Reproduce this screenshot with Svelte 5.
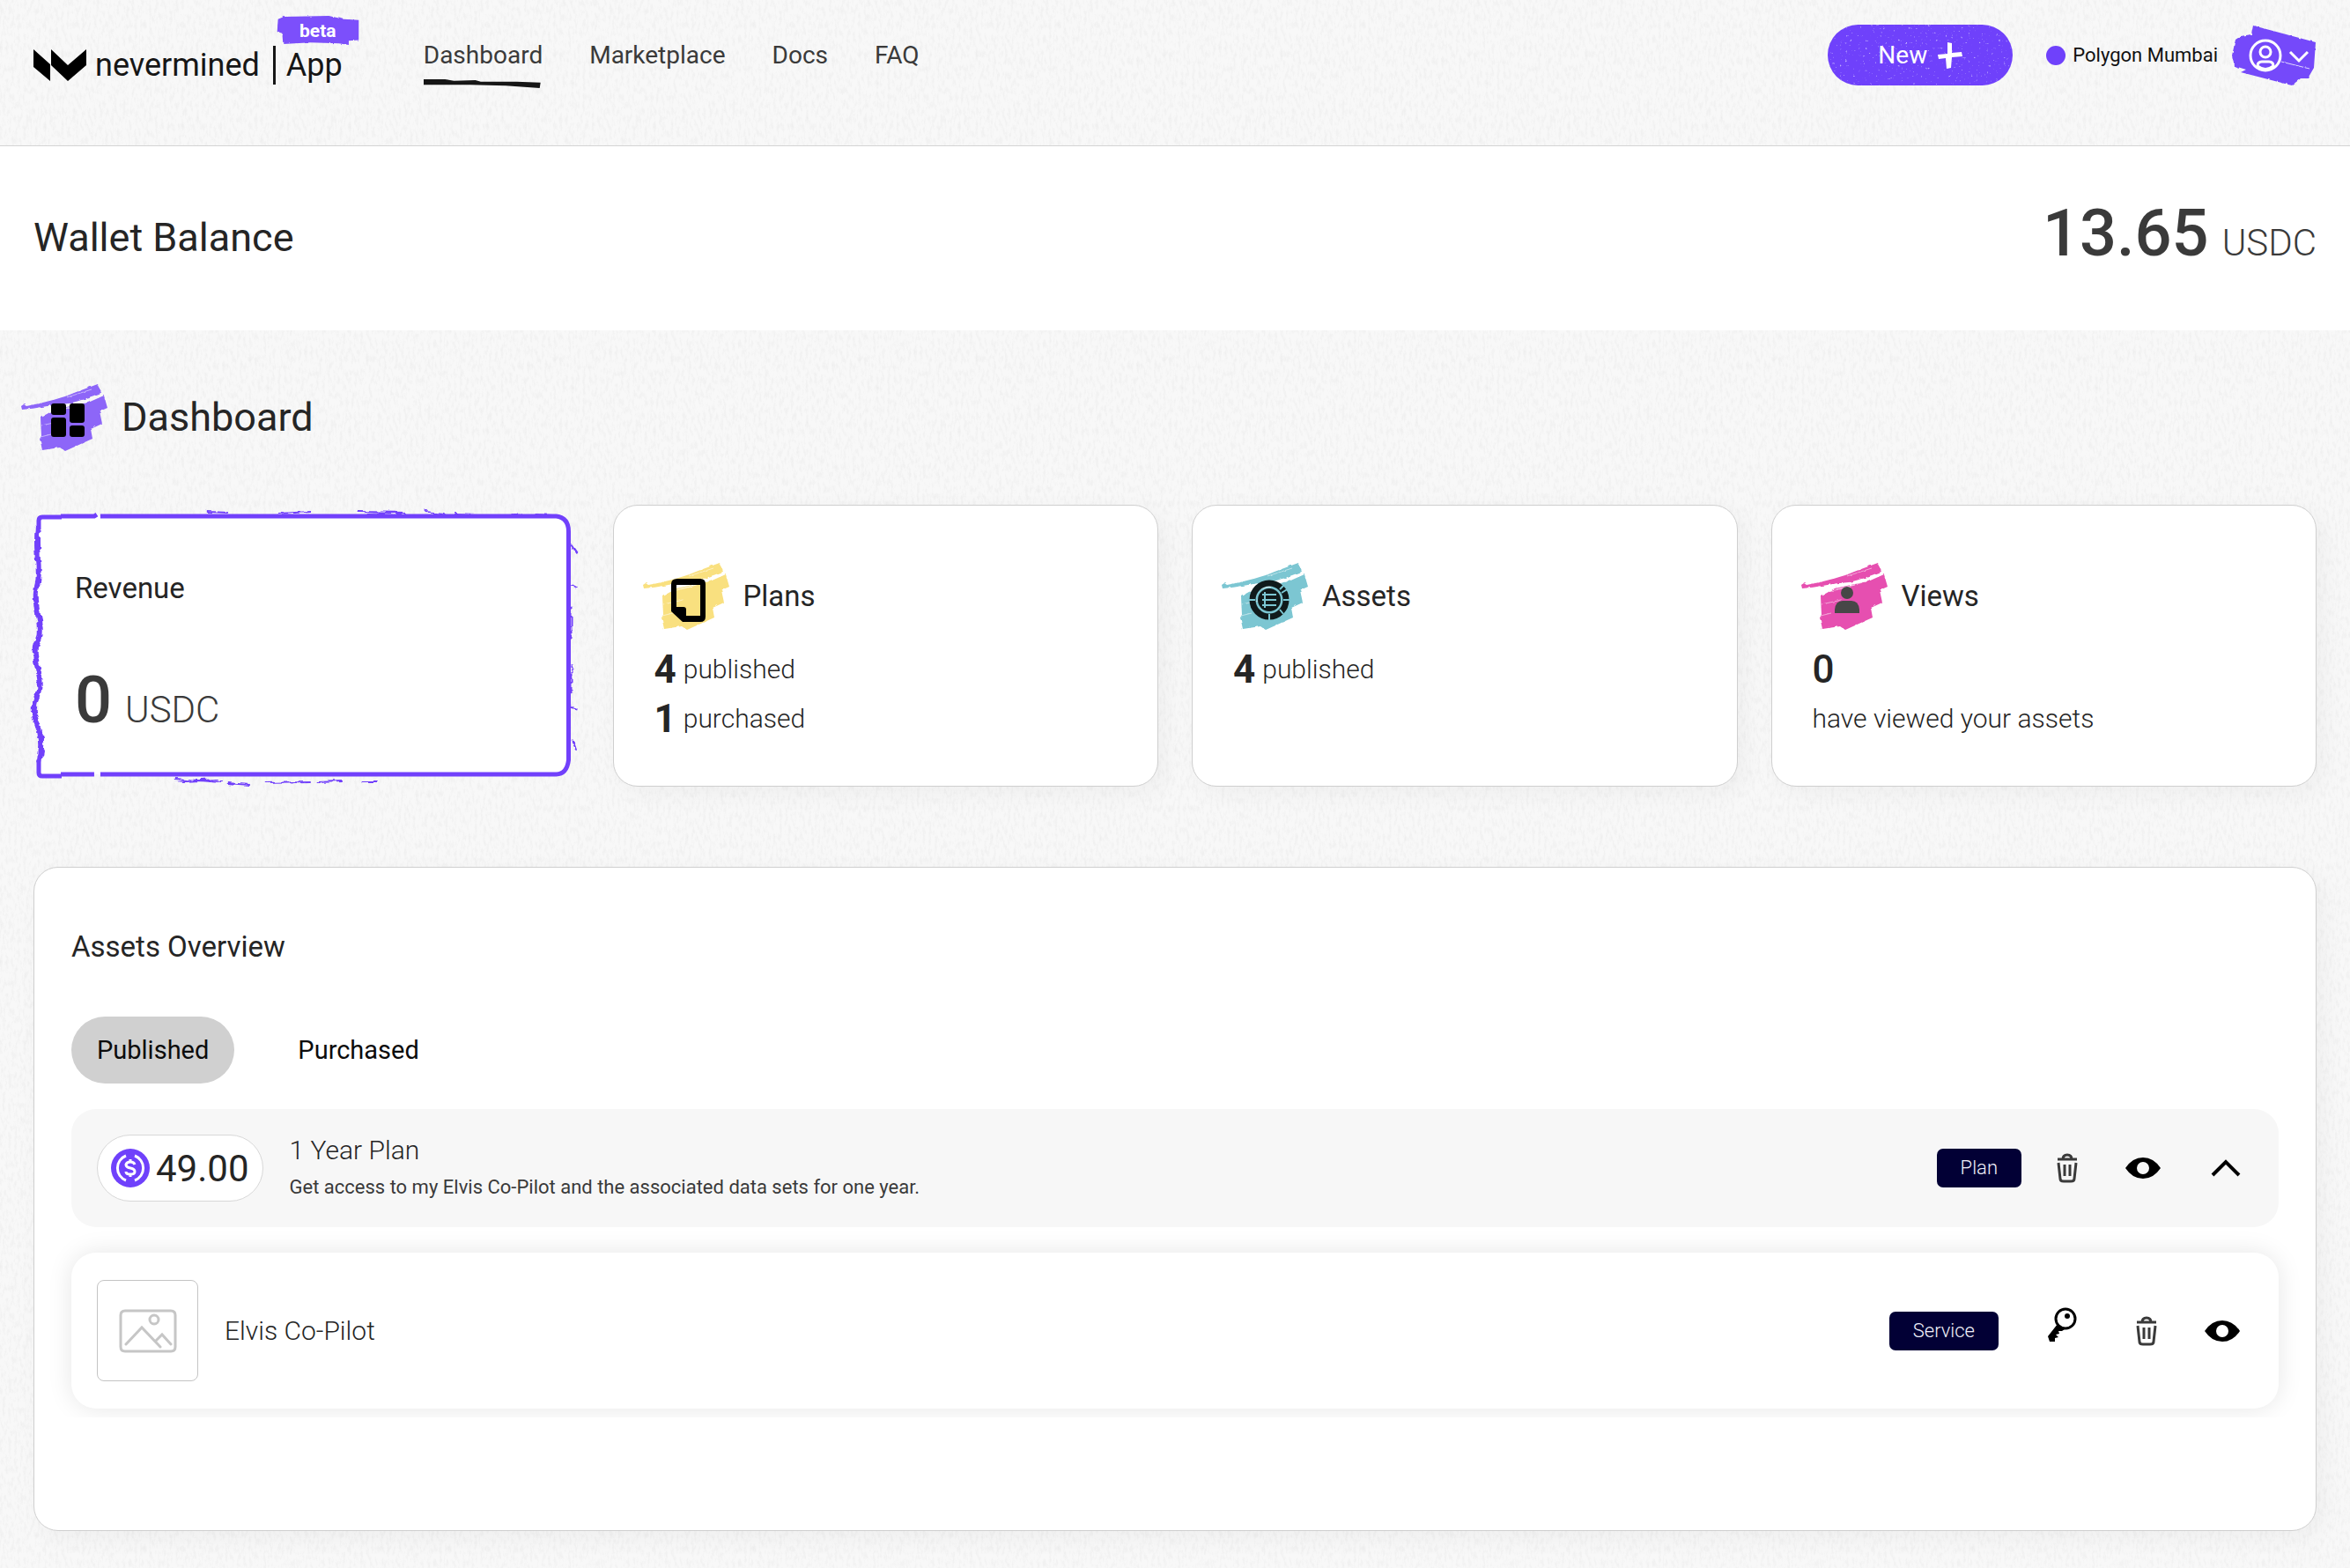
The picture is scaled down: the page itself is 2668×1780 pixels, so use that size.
<script>
  let activeTab = $state('Published');
  let expanded = $state(true);

  const tabs = ['Published', 'Purchased'];
  const links = ['Dashboard', 'Marketplace', 'Docs', 'FAQ'];

  const cards = [
    { title: 'Plans', tone: 'yellow', icon: 'page', rows: [['4', 'published'], ['1', 'purchased']] },
    { title: 'Assets', tone: 'teal', icon: 'chip', rows: [['4', 'published']] },
    { title: 'Views', tone: 'pink', icon: 'person', rows: [['0', ''], ['', 'have viewed your assets']] }
  ];
</script>

{#snippet brush(tone, icon)}
  <svg class="brush {tone}" viewBox="0 0 98 76" aria-hidden="true">
    <g filter="url(#rough)">
      <path d="M0 25L3 23 6 25Q42 18 60 10L87 0 91 10Q64 20 54 22Q38 23 24 26Q14 28 1 29Z" />
      <path d="M22 38L38 29 56 25 76 21 94 13 98 27 89 31 92 45 79 51 81 62 50 76 44 72 24 75 21 61 23 59Z" />
      <path class="streak" d="M23 47L46 42M34 32Q60 26 78 19M40 30L64 24M22 60L34 57M52 15L80 6" />
    </g>
    {#if icon === 'tiles'}
      <g class="ink">
        <rect x="34" y="22" width="17" height="13" rx="3" />
        <rect x="34" y="38" width="17" height="22" rx="3" />
        <rect x="55" y="22" width="17" height="22" rx="3" />
        <rect x="55" y="47" width="17" height="13" rx="3" />
      </g>
    {:else if icon === 'page'}
      <path class="ink" fill-rule="evenodd" d="M39 18H65Q71 18 71 24V61Q71 67 65 67H45L32 55V24Q32 18 39 18ZM38 25V50H46Q49 50 49 53V60H65V25Z" />
    {:else if icon === 'chip'}
      <g class="dark">
        <circle cx="54" cy="42" r="19" fill="none" stroke-width="7" />
        <circle cx="54" cy="42" r="13" stroke="none" />
      </g>
      <path class="cut" d="M31 42H38M54 58V65M70 42H77M66 30L71 25M68 34L76 29M66 53L70 58" />
      <path class="cut" d="M46 36H62M46 42H62M46 48H62M49 33V51" />
    {:else}
      <g class="person">
        <ellipse cx="52" cy="34" rx="7" ry="7" />
        <path d="M38 57V53Q39 43 47 43H57Q65 43 66 53V57Z" />
      </g>
    {/if}
  </svg>
{/snippet}

{#snippet trash()}
  <svg class="trash" viewBox="0 0 24 32" aria-hidden="true">
    <path d="M1 6H23M7 6Q7 1 12 1T17 6M2 10L4 28Q4 31 8 31H16Q20 31 20 28L22 10M9 12V25M15 12V25" />
  </svg>
{/snippet}

{#snippet eye()}
  <svg class="eye" viewBox="0 0 40 26" aria-hidden="true">
    <path fill-rule="evenodd" d="M0 13Q8 1 20 1T40 13Q32 25 20 25T0 13ZM20 6A7 7 0 1 0 20 20A7 7 0 1 0 20 6Z" />
  </svg>
{/snippet}

<svg class="defs" aria-hidden="true">
  <filter id="rough" x="-5%" y="-10%" width="110%" height="120%">
    <feTurbulence type="fractalNoise" baseFrequency="0.2" numOctaves="1" seed="4" />
    <feDisplacementMap in="SourceGraphic" scale="3" xChannelSelector="R" yChannelSelector="G" />
  </filter>
  <filter id="ragged" x="-5%" y="-5%" width="110%" height="110%">
    <feTurbulence type="fractalNoise" baseFrequency="0.06 0.12" numOctaves="3" seed="9" result="n" />
    <feDisplacementMap in="SourceGraphic" in2="n" scale="7" xChannelSelector="R" yChannelSelector="G" />
  </filter>
</svg>

<header>
  <a class="logo" href="#home" aria-label="nevermined App beta">
    <svg class="mark" viewBox="0 0 60 36" aria-hidden="true">
      <path d="M0 0L19 17V36L0 20ZM20 0L39 18 60 0V18L39 36 20 18Z" />
    </svg>
    <span class="name">nevermined</span>
    <span class="bar"></span>
    <span class="app">App</span>
    <span class="beta">
      <svg viewBox="0 0 98 36" aria-hidden="true">
        <path filter="url(#rough)" d="M1 4L8 1 62 0 80 4 98 5V29L86 30V35L74 33 40 32 7 34 6 21 0 19Z" />
      </svg>
      <b>beta</b>
    </span>
  </a>
  <nav>
    {#each links as link, i}
      <a href="#{link}" aria-current={i === 0 ? 'page' : undefined}>
        {link}
        {#if i === 0}
          <svg class="underline" viewBox="0 0 131 11" preserveAspectRatio="none" aria-hidden="true">
            <path d="M0 0L24 0 34 2 58 1 64 3 104 3 131 4 130 11 92 8 52 7 0 7Z" />
          </svg>
        {/if}
      </a>
    {/each}
  </nav>
  <button class="new" type="button">
    New
    <svg viewBox="0 0 28 30" aria-hidden="true">
      <path d="M11 0L16 1V12L27 11 28 16 16 17 15 29 10 30 9 18 1 19 0 14 11 13Z" />
    </svg>
  </button>
  <span class="network"><i></i>Polygon Mumbai</span>
  <button class="account" type="button" aria-label="Account menu">
    <svg viewBox="0 0 96 68" aria-hidden="true">
      <g filter="url(#rough)">
        <path class="paint" d="M24 0L95 19 93 48 86 60 78 60 68 68 10 53 16 50 3 46 0 34 4 16 10 12 22 10Z" />
        <path class="scratch" d="M56 41L88 49" />
      </g>
      <g class="line">
        <circle cx="38" cy="34" r="17" />
        <circle cx="38" cy="30" r="6" />
        <path d="M29 46Q29 41 34 41H42Q47 41 47 46Q38 53 29 46ZM66 30L76 40 86 30" />
      </g>
    </svg>
  </button>
</header>

<section class="wallet">
  <h2>Wallet Balance</h2>
  <p class="amount"><strong>13.65</strong><span>USDC</span></p>
</section>

<main>
  <h1>{@render brush('violet', 'tiles')}Dashboard</h1>

  <div class="cards">
    <article class="revenue">
      <svg class="frame" viewBox="0 0 620 318" preserveAspectRatio="none" aria-hidden="true">
        <path class="paper" d="M6 13H596Q608 15 608 30V288Q608 303 596 304H6Z" />
        <path class="edge" d="M31 13H69L72 11M76 13H594Q608 15 608 30V288Q606 304 594 304H76M69 304H31M32 14H10Q6 14 6 18V28M6 288V302Q6 306 10 306H32" />
        <g filter="url(#ragged)">
          <path class="side" d="M5 24Q3 42 5 62T4 92T5 124T4 154T5 184T4 218T5 250T6 290" />
          <path class="spray" d="M197 8L222 9M278 10L315 8M368 8L424 9M378 11L416 10M444 8L466 10M478 10L502 11M542 10L556 11M570 11L590 12M161 309L214 313M170 312L210 310M220 314L246 316M262 313L314 312M322 313L352 312M374 312L390 312" />
          <path class="spray" d="M611 44L618 54M611 90L618 94M611 228L618 230M613 266L617 278M611 114V154M611 180V214" />
        </g>
      </svg>
      <h3>Revenue</h3>
      <p class="amount"><strong>0</strong><span>USDC</span></p>
    </article>
    {#each cards as card}
      <article class="card">
        <h3>{@render brush(card.tone, card.icon)}{card.title}</h3>
        {#each card.rows as [count, label]}
          <p>
            {#if count}<strong class:medium={!label}>{count}</strong>{/if}
            {#if label}<span>{label}</span>{/if}
          </p>
        {/each}
      </article>
    {/each}
  </div>

  <section class="panel">
    <h3>Assets Overview</h3>
    <div class="tabs" role="tablist">
      {#each tabs as tab}
        <button type="button" role="tab" aria-selected={activeTab === tab} onclick={() => (activeTab = tab)}>{tab}</button>
      {/each}
    </div>

    <div class="row plan">
      <span class="price">
        <svg viewBox="0 0 44 44" aria-hidden="true">
          <circle cx="22" cy="22" r="22" />
          <path d="M17 8A15 15 0 0 0 17 36M27 8A15 15 0 0 1 27 36" />
          <path d="M27 18Q26 15 22 15T17 18Q17 21 22 22T27 26Q27 29 22 29T17 26M22 12V15M22 29V32" />
        </svg>
        49.00
      </span>
      <div class="info">
        <h4>1 Year Plan</h4>
        <p>Get access to my Elvis Co-Pilot and the associated data sets for one year.</p>
      </div>
      <div class="actions">
        <span class="badge">Plan</span>
        <button type="button" aria-label="Delete plan">{@render trash()}</button>
        <button type="button" aria-label="View plan">{@render eye()}</button>
        <button class="toggle" type="button" aria-label="Toggle plan assets" aria-expanded={expanded} onclick={() => (expanded = !expanded)}>
          <svg class="chevron" viewBox="0 0 34 22" aria-hidden="true"><path d="M2 19L17 4 32 19" /></svg>
        </button>
      </div>
    </div>

    {#if expanded}
      <div class="row asset">
        <span class="thumb">
          <svg viewBox="0 0 66 50" aria-hidden="true">
            <path d="M7 2H59Q64 2 64 7V43Q64 48 59 48H7Q2 48 2 43V7Q2 2 7 2ZM8 40L26 21 47 43M42 36L49 29 59 40" />
            <circle cx="40" cy="12" r="5" />
          </svg>
        </span>
        <h4>Elvis Co-Pilot</h4>
        <div class="actions">
          <span class="badge">Service</span>
          <button class="access" type="button" aria-label="Access keys">
            <svg class="key" viewBox="0 0 34 40" aria-hidden="true">
              <circle class="ring" cx="21" cy="13" r="11" />
              <circle cx="23" cy="10" r="3" />
              <path d="M12 19L20 25 17 27 13 27 14 30 10 31 13 34 9 35V39H3L1 33Z" />
            </svg>
          </button>
          <button type="button" aria-label="Delete asset">{@render trash()}</button>
          <button type="button" aria-label="View asset">{@render eye()}</button>
        </div>
      </div>
    {/if}
  </section>
</main>

<style>
  :global(body) {
    margin: 0;
    color: #252525;
    font-family: Roboto, 'Noto Sans', sans-serif;
    background: #f8f8f8 url("data:image/svg+xml,%3Csvg xmlns='http://www.w3.org/2000/svg' width='346' height='346'%3E%3Cfilter id='a' x='0' y='0' width='100%25' height='100%25'%3E%3CfeTurbulence type='fractalNoise' baseFrequency='.3 .12' numOctaves='4' seed='3' stitchTiles='stitch'/%3E%3CfeColorMatrix values='0 0 0 0 .4 0 0 0 0 .4 0 0 0 0 .4 .26 0 0 0 -.115'/%3E%3C/filter%3E%3Crect width='346' height='346' filter='url(%23a)'/%3E%3C/svg%3E");
  }
  :global(body *) {
    box-sizing: border-box;
  }
  h1, h2, h3, h4, p {
    margin: 0;
    font-weight: 400;
  }
  a {
    color: inherit;
    text-decoration: none;
  }
  button {
    padding: 0;
    border: 0;
    color: inherit;
    font: inherit;
    background: none;
    cursor: pointer;
  }
  svg {
    display: block;
    flex: none;
    overflow: visible;
  }
  .defs {
    position: absolute;
    width: 0;
    height: 0;
  }

  header {
    display: flex;
    align-items: center;
    padding: 28px 38px 68px;
    border-bottom: 1px solid #d4d4d4;
  }
  .logo {
    position: relative;
    display: flex;
    align-items: center;
    padding-top: 22px;
    color: #161616;
    font-size: 36px;
    line-height: 44px;
  }
  .mark {
    width: 60px;
    height: 36px;
    margin-right: 10px;
    fill: #000;
  }
  .bar {
    width: 3px;
    height: 44px;
    margin: 0 12px 0 15px;
    background: #161616;
  }
  .beta {
    position: absolute;
    top: -12px;
    right: -21px;
    display: grid;
    place-items: center;
    width: 98px;
    height: 34px;
    color: #fff;
    font-size: 21px;
    line-height: 30px;
  }
  .beta > * {
    grid-area: 1 / 1;
  }
  .beta b {
    position: relative;
  }
  .beta svg {
    width: 98px;
    height: 34px;
    fill: #7b4ffb;
  }
  nav {
    display: flex;
    gap: 53px;
    margin: 0 auto 0 92px;
    color: #3a3a3a;
    font-size: 28px;
    line-height: 36px;
  }
  nav a {
    position: relative;
  }
  .underline {
    position: absolute;
    top: 45px;
    left: 0;
    width: 98%;
    height: 10px;
    fill: #161616;
  }
  .new {
    display: flex;
    align-items: center;
    justify-content: center;
    gap: 12px;
    width: 210px;
    height: 69px;
    border-radius: 35px;
    color: #fff;
    font-size: 28px;
    background: #6f41fb url("data:image/svg+xml,%3Csvg xmlns='http://www.w3.org/2000/svg' width='210' height='70'%3E%3Cfilter id='a' x='0' y='0' width='100%25' height='100%25'%3E%3CfeTurbulence type='fractalNoise' baseFrequency='.35' numOctaves='2' seed='8'/%3E%3CfeColorMatrix values='0 0 0 0 1 0 0 0 0 1 0 0 0 0 1 4 0 0 0 -2.7'/%3E%3C/filter%3E%3Crect width='210' height='70' filter='url(%23a)' opacity='.7'/%3E%3C/svg%3E");
  }
  .new svg {
    width: 28px;
    height: 30px;
    fill: #fff;
  }
  .network {
    display: flex;
    align-items: center;
    gap: 8px;
    margin: 0 16px 0 38px;
    color: #111;
    font-size: 22px;
    white-space: nowrap;
  }
  .network i {
    width: 22px;
    height: 22px;
    border-radius: 50%;
    background: #6f41fb;
  }
  .account svg {
    width: 96px;
    height: 68px;
  }
  .paint {
    fill: #7449fa;
  }
  .scratch {
    stroke: #e2d9ff;
    stroke-width: 1;
  }
  .line {
    fill: none;
    stroke: #fff;
    stroke-width: 3;
  }

  .wallet {
    display: flex;
    align-items: center;
    justify-content: space-between;
    height: 209px;
    padding: 0 38px;
    background: #fff;
  }
  h1, h2 {
    font-size: 45px;
    line-height: 52px;
  }
  .wallet h2 {
    padding-bottom: 2px;
  }
  .amount {
    display: flex;
    align-items: baseline;
    gap: 15px;
    color: #3a3a3a;
    font-size: 42px;
    font-weight: 300;
    line-height: 84px;
    white-space: nowrap;
  }
  .amount strong {
    font-size: 74px;
    font-weight: 500;
  }

  main {
    padding: 61px 38px 43px;
  }
  h1 {
    display: flex;
    align-items: center;
    gap: 16px;
    margin-left: -14px;
  }
  .brush {
    width: 98px;
    height: 76px;
  }
  .violet { fill: #8d66f8; }
  .yellow { fill: #f9e07f; }
  .teal { fill: #7bc6d2; }
  .pink { fill: #e64fb0; }
  .streak {
    fill: none;
    stroke: #fff;
    stroke-opacity: 0.5;
    stroke-width: 1;
  }
  .ink {
    fill: #000;
  }
  .dark {
    fill: #101a1b;
    stroke: #101a1b;
  }
  .cut {
    fill: none;
    stroke: #7bc6d2;
    stroke-width: 2;
  }
  .person {
    fill: #474747;
  }

  .cards {
    display: grid;
    grid-template-columns: repeat(4, minmax(0, 1fr));
    gap: 38px;
    margin: 61px 0 91px;
  }
  h3 {
    font-size: 33px;
    line-height: 40px;
  }
  .card {
    padding: 65px 46px 48px;
    border: 1px solid #cfcfcf;
    border-radius: 28px;
    background: #fff;
    box-shadow: 8px 8px 28px rgb(0 0 0 / 4%);
  }
  .card h3 {
    display: flex;
    align-items: center;
    gap: 16px;
    margin: 0 0 17px -13px;
  }
  .card p {
    display: flex;
    align-items: center;
    gap: 8px;
    font-size: 30px;
    font-weight: 300;
    line-height: 56px;
  }
  .card strong {
    font-size: 44px;
    font-weight: 700;
  }
  .card .medium {
    font-weight: 500;
  }
  .revenue {
    position: relative;
    padding: 75px 47px 0;
  }
  .revenue > * {
    position: relative;
  }
  .revenue h3 {
    margin-bottom: 65px;
  }
  .revenue .frame {
    position: absolute;
    inset: 0;
    width: 100%;
    height: 100%;
  }
  .paper {
    fill: #fff;
  }
  .edge, .side, .spray {
    fill: none;
    stroke: #7140fb;
    stroke-width: 5;
  }
  .side {
    stroke-width: 6;
  }
  .spray {
    stroke-width: 2;
  }

  .panel {
    padding: 70px 42px 138px;
    border: 1px solid #cfcfcf;
    border-radius: 28px;
    background: #fff;
    box-shadow: 8px 8px 28px rgb(0 0 0 / 4%);
  }
  .tabs {
    display: flex;
    gap: 43px;
    margin: 59px 0 29px;
  }
  .tabs button {
    height: 76px;
    padding: 0 29px;
    border-radius: 38px;
    color: #0c0c0c;
    font-size: 29px;
  }
  .tabs [aria-selected='true'] {
    background: #d0d0d0;
  }
  .row {
    display: flex;
    align-items: center;
    gap: 30px;
    border-radius: 28px;
  }
  .plan {
    height: 134px;
    padding: 0 38px 0 29px;
    background: #f7f7f7;
  }
  .asset {
    height: 177px;
    margin-top: 29px;
    padding: 0 42px 0 29px;
    background: #fff;
    box-shadow: 0 0 28px rgb(0 0 0 / 10%);
    clip-path: inset(-28px -28px -10px);
  }
  .price {
    display: flex;
    align-items: center;
    gap: 7px;
    height: 76px;
    padding: 0 15px;
    border: 1px solid #d8d8d8;
    border-radius: 38px;
    font-size: 42px;
    background: #fff;
  }
  .price svg {
    width: 44px;
    height: 44px;
    fill: #6f41fb;
  }
  .price path {
    fill: none;
    stroke: #fff;
    stroke-width: 3;
  }
  h4 {
    font-size: 30px;
    font-weight: 300;
    line-height: 44px;
  }
  .info p {
    color: #3a3a3a;
    font-size: 22px;
    line-height: 40px;
  }
  .actions {
    display: flex;
    align-items: center;
    gap: 42px;
    margin-left: auto;
  }
  .actions button {
    display: grid;
    place-items: center;
    width: 44px;
    height: 44px;
  }
  .badge {
    padding: 0 27px;
    border-radius: 7px;
    color: #f0f0fa;
    font-size: 22px;
    font-weight: 300;
    line-height: 44px;
    background: #020035;
  }
  .plan .badge {
    margin-right: -12px;
  }
  .asset .badge {
    margin-right: 8px;
  }
  .actions .access {
    margin: 0 10px 14px 0;
  }
  .toggle {
    margin-left: 8px;
  }
  .trash {
    width: 24px;
    height: 32px;
    fill: none;
    stroke: #3a3a3a;
    stroke-width: 3;
  }
  .eye {
    width: 40px;
    height: 26px;
  }
  .chevron {
    width: 34px;
    height: 22px;
    fill: none;
    stroke: #000;
    stroke-width: 4;
  }
  .key {
    width: 34px;
    height: 40px;
  }
  .ring {
    fill: none;
    stroke: #000;
    stroke-width: 3;
  }
  .thumb {
    display: grid;
    place-items: center;
    width: 115px;
    height: 115px;
    border: 1px solid #c4c4c4;
    border-radius: 8px;
  }
  .thumb svg {
    width: 66px;
    height: 50px;
    fill: none;
    stroke: #c6c6c6;
    stroke-width: 3;
    stroke-linecap: round;
  }
</style>
